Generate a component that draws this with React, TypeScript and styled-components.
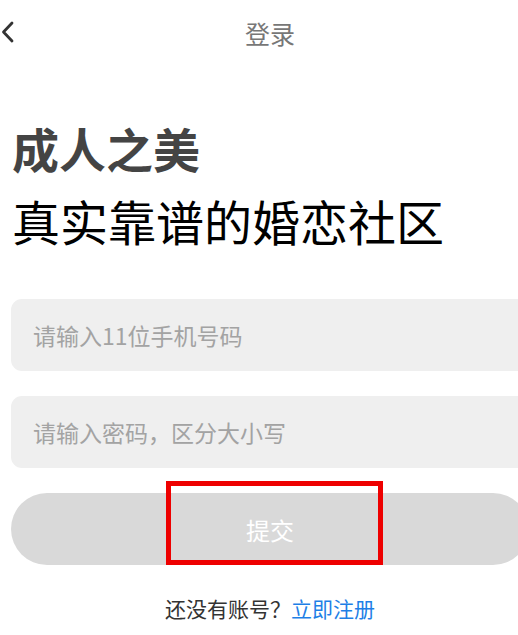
import React from "react";
import styled, { createGlobalStyle } from "styled-components";

const GlobalStyle = createGlobalStyle`
  html, body {
    margin: 0;
    padding: 0;
    background: #ffffff;
    overflow: hidden;
  }
  body {
    font-family: "Noto Sans CJK SC", "Noto Sans", sans-serif;
  }
`;

const App: React.FC = () => {
  return (
    <>
      <GlobalStyle />
      <StyledPage>
        <StyledNav>
          <StyledBack aria-label="返回">
            <svg width="16" height="24" viewBox="0 0 16 24">
              <path d="M12 3 L3.5 12 L12 21" fill="none" stroke="#333" strokeWidth="2.8" strokeLinecap="round" strokeLinejoin="round" />
            </svg>
          </StyledBack>
          <StyledTitle>登录</StyledTitle>
        </StyledNav>

        <StyledHeading>
          <StyledBrand>成人之美</StyledBrand>
          <StyledSlogan>真实靠谱的婚恋社区</StyledSlogan>
        </StyledHeading>

        <StyledForm>
          <StyledInput placeholder="请输入11位手机号码" />
          <StyledInput type="password" placeholder="请输入密码，区分大小写" />
          <StyledSubmitWrap>
            <StyledSubmit type="button">提交</StyledSubmit>
            <StyledHighlight />
          </StyledSubmitWrap>
        </StyledForm>

        <StyledFooter>
          还没有账号？<StyledLink>立即注册</StyledLink>
        </StyledFooter>
      </StyledPage>
    </>
  );
};

const StyledPage = styled.div`
  width: 540px;
  height: 635px;
  display: flex;
  flex-direction: column;
`;

const StyledNav = styled.div`
  position: relative;
  height: 70px;
  display: flex;
  align-items: center;
  justify-content: center;
`;

const StyledBack = styled.div`
  position: absolute;
  left: 0;
  top: 20px;
  width: 18px;
  height: 24px;
  display: flex;
  align-items: center;
`;

const StyledTitle = styled.div`
  font-size: 25px;
  color: #777777;
  line-height: 1;
  margin-top: -4px;
`;

const StyledHeading = styled.div`
  display: flex;
  flex-direction: column;
  padding: 48px 0 0 12px;
  gap: 12px;
`;

const StyledBrand = styled.h1`
  margin: 0;
  font-size: 47px;
  font-weight: 700;
  color: #444444;
  line-height: 60px;
`;

const StyledSlogan = styled.h2`
  margin: 0;
  font-size: 48px;
  font-weight: 400;
  color: #000000;
  line-height: 60px;
`;

const StyledForm = styled.div`
  display: flex;
  flex-direction: column;
  gap: 25px;
  padding: 49px 11px 0;
`;

const StyledInput = styled.input`
  box-sizing: border-box;
  width: 100%;
  height: 72px;
  border: none;
  outline: none;
  border-radius: 11px;
  background: #efefef;
  padding: 0 22px;
  font-family: inherit;
  font-size: 23px;
  color: #333;

  &::placeholder {
    color: #a3a3a3;
  }
`;

const StyledSubmitWrap = styled.div`
  position: relative;
  display: flex;
`;

const StyledSubmit = styled.button`
  width: 100%;
  height: 72px;
  border: none;
  border-radius: 36px;
  background: #d9d9d9;
  color: #ffffff;
  font-family: inherit;
  font-size: 24px;
`;

const StyledHighlight = styled.div`
  position: absolute;
  left: 155px;
  top: -12px;
  width: 217px;
  height: 84px;
  box-sizing: border-box;
  border: 5px solid #ee0000;
  pointer-events: none;
`;

const StyledFooter = styled.div`
  margin-top: 28px;
  text-align: center;
  font-size: 21px;
  color: #333333;
`;

const StyledLink = styled.span`
  color: #1e7fe6;
`;

export default App;
